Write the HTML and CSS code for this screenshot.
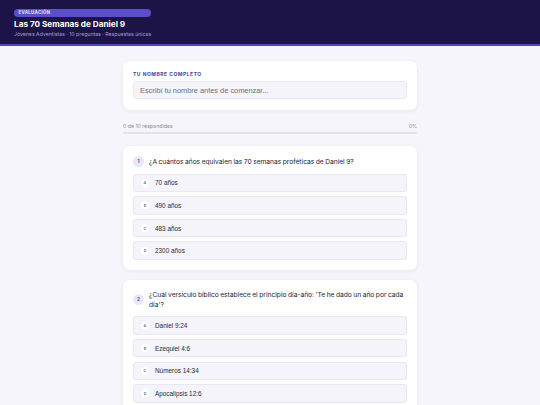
FILE: index.html
```html
<!DOCTYPE html>
<html lang="es">
<head>
<meta charset="utf-8">
<title>Las 70 Semanas de Daniel 9</title>
<link rel="stylesheet" href="styles.css">
</head>
<body>
<header class="topbar">
  <div class="topbar-inner">
    <span class="badge">EVALUACIÓN</span>
    <h1 class="title">Las 70 Semanas de Daniel 9</h1>
    <p class="subtitle">Jóvenes Adventistas · 10 preguntas · Respuestas únicas</p>
  </div>
</header>
<main class="container">
  <section class="card name-card">
    <label class="field-label" for="nombre">TU NOMBRE COMPLETO</label>
    <input class="field-input" id="nombre" type="text" placeholder="Escribí tu nombre antes de comenzar...">
  </section>

  <div class="progress">
    <div class="progress-text"><span>0 de 10 respondidas</span><span>0%</span></div>
    <div class="progress-track"><div class="progress-fill" style="width:0%"></div></div>
  </div>

  <section class="card question">
    <div class="q-head"><span class="q-num">1</span><p class="q-text">¿A cuántos años equivalen las 70 semanas proféticas de Daniel 9?</p></div>
    <div class="options">
      <button class="option"><span class="opt-letter">A</span><span class="opt-text">70 años</span></button>
      <button class="option"><span class="opt-letter">B</span><span class="opt-text">490 años</span></button>
      <button class="option"><span class="opt-letter">C</span><span class="opt-text">483 años</span></button>
      <button class="option"><span class="opt-letter">D</span><span class="opt-text">2300 años</span></button>
    </div>
  </section>

  <section class="card question">
    <div class="q-head"><span class="q-num">2</span><p class="q-text">¿Cuál versículo bíblico establece el principio día-año: 'Te he dado un año por cada día'?</p></div>
    <div class="options">
      <button class="option"><span class="opt-letter">A</span><span class="opt-text">Daniel 9:24</span></button>
      <button class="option"><span class="opt-letter">B</span><span class="opt-text">Ezequiel 4:6</span></button>
      <button class="option"><span class="opt-letter">C</span><span class="opt-text">Números 14:34</span></button>
      <button class="option"><span class="opt-letter">D</span><span class="opt-text">Apocalipsis 12:6</span></button>
    </div>
  </section>
</main>
</body>
</html>
```
FILE: styles.css
```css
* { box-sizing: border-box; }
html, body { margin: 0; padding: 0; }
body {
  background: #f5f5fb;
  font-family: Inter, "Noto Sans", sans-serif;
  color: #1f1d2e;
}
.topbar {
  background: #1c1447;
  border-bottom: 2px solid #5548b4;
  height: 46px;
  padding: 9px 14px 0;
}
.topbar-inner {
  display: flex;
  flex-direction: column;
  width: max-content;
}
.badge {
  display: block;
  background: #5b4fc9;
  color: #e4e0ff;
  font-size: 4.4px;
  font-weight: 700;
  letter-spacing: 0.3px;
  line-height: 8px;
  height: 8px;
  border-radius: 4px;
  padding: 0 4.5px;
}
.title {
  margin: 1.5px 0 0;
  color: #ffffff;
  font-size: 8.2px;
  font-weight: 700;
  line-height: 11px;
}
.subtitle {
  margin: 1px 0 0;
  color: #a29ecb;
  font-size: 5.2px;
  line-height: 7px;
}
.container {
  width: 294px;
  margin: 15px auto 0;
}
.card {
  background: #ffffff;
  border-radius: 7px;
  box-shadow: 0 1px 4px rgba(40, 30, 100, 0.07);
}
.name-card {
  padding: 10px 10px 11px;
  display: flex;
  flex-direction: column;
  height: 49px;
}
.field-label {
  color: #4a3f98;
  font-size: 5px;
  font-weight: 700;
  letter-spacing: 0.5px;
  line-height: 7px;
  margin-bottom: 3px;
}
.field-input {
  height: 18px;
  border: 1px solid #e9e8f3;
  background: #f4f4fa;
  border-radius: 3px;
  padding: 0 6px;
  font-family: "Liberation Sans", Arial, sans-serif;
  font-size: 7.4px;
  color: #333;
  outline: none;
}
.field-input::placeholder { color: #6e6d7c; }
.progress {
  margin: 13px 0 12px;
}
.progress-text {
  display: flex;
  justify-content: space-between;
  font-size: 5.2px;
  color: #8a8999;
  line-height: 6px;
}
.progress-track {
  margin-top: 3px;
  height: 2px;
  background: #e3e3ee;
  border-radius: 1px;
}
.progress-fill { height: 100%; background: #5b4fc9; }
.question {
  padding: 10px 10px 10px;
  margin-bottom: 10px;
}
.q-head {
  display: flex;
  align-items: center;
  gap: 5px;
  margin-bottom: 6.7px;
}
.q-num {
  flex: none;
  width: 11px;
  height: 11px;
  border-radius: 50%;
  background: #e9e7f9;
  color: #4a3f98;
  font-size: 4.6px;
  font-weight: 700;
  display: flex;
  align-items: center;
  justify-content: center;
}
.q-text {
  margin: 0;
  font-size: 6.65px;
  line-height: 10px;
  word-spacing: -0.35px;
  color: #23212f;
}
.options {
  display: flex;
  flex-direction: column;
  gap: 4.3px;
}
.option {
  display: flex;
  align-items: center;
  gap: 6px;
  height: 18.3px;
  padding: 0 7px;
  background: #f4f4fa;
  border: 1px solid #e8e7f2;
  border-radius: 3px;
  font-family: "Liberation Sans", Arial, sans-serif;
  text-align: left;
  cursor: pointer;
}
.opt-letter {
  flex: none;
  width: 8px;
  height: 8px;
  border-radius: 50%;
  background: #ffffff;
  color: #6f6d80;
  font-family: Inter, sans-serif;
  font-size: 3.8px;
  font-weight: 600;
  display: flex;
  align-items: center;
  justify-content: center;
}
.opt-text {
  font-size: 6.4px;
  color: #2a2838;
}
```
